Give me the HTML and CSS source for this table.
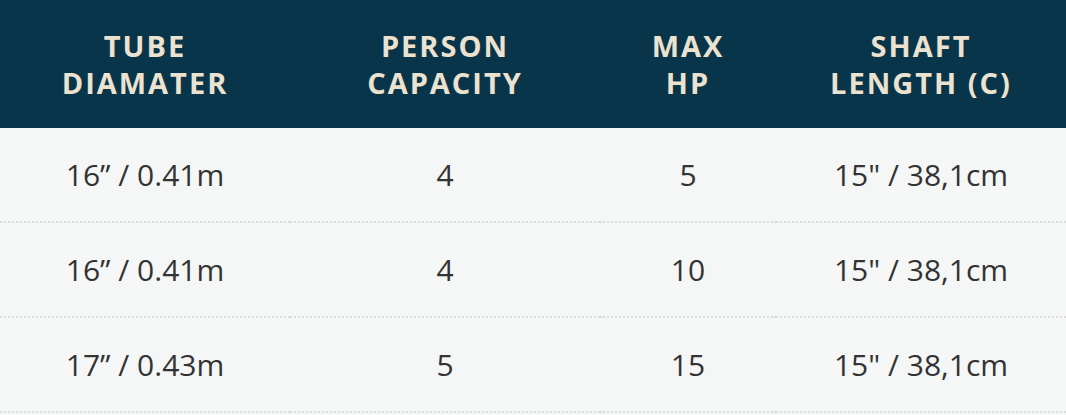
FILE: index.html
```html
<!DOCTYPE html>
<html lang="en">
<head>
<meta charset="utf-8">
<title>Specs</title>
<link rel="stylesheet" href="styles.css">
</head>
<body>
<table class="specs">
  <colgroup>
    <col class="c1"><col class="c2"><col class="c3"><col class="c4">
  </colgroup>
  <thead>
    <tr>
      <th>TUBE<br>DIAMATER</th>
      <th>PERSON<br>CAPACITY</th>
      <th>MAX<br>HP</th>
      <th>SHAFT<br>LENGTH (C)</th>
    </tr>
  </thead>
  <tbody>
    <tr><td>16” / 0.41m</td><td>4</td><td>5</td><td>15" / 38,1cm</td></tr>
    <tr><td>16” / 0.41m</td><td>4</td><td>10</td><td>15" / 38,1cm</td></tr>
    <tr><td>17” / 0.43m</td><td>5</td><td>15</td><td>15" / 38,1cm</td></tr>
  </tbody>
</table>
</body>
</html>
```
FILE: styles.css
```css
html, body {
  margin: 0;
  padding: 0;
  background: #f5f7f6;
}
.specs {
  width: 1066px;
  border-collapse: collapse;
  table-layout: fixed;
  font-family: "Open Sans", "Liberation Sans", sans-serif;
}
.c1 { width: 290px; }
.c2 { width: 310px; }
.c3 { width: 176px; }
.c4 { width: 290px; }
.specs th {
  background: #08354a;
  color: #ece2d0;
  font-weight: 700;
  font-size: 29px;
  line-height: 37px;
  letter-spacing: 2px;
  height: 128px;
  padding: 0;
  text-align: center;
  vertical-align: middle;
}
.specs td {
  height: 93px;
  padding: 0;
  text-align: center;
  vertical-align: middle;
  color: #333;
  font-size: 30px;
  font-weight: 400;
  border-bottom: 2px dotted #dcdcdc;
}
```
